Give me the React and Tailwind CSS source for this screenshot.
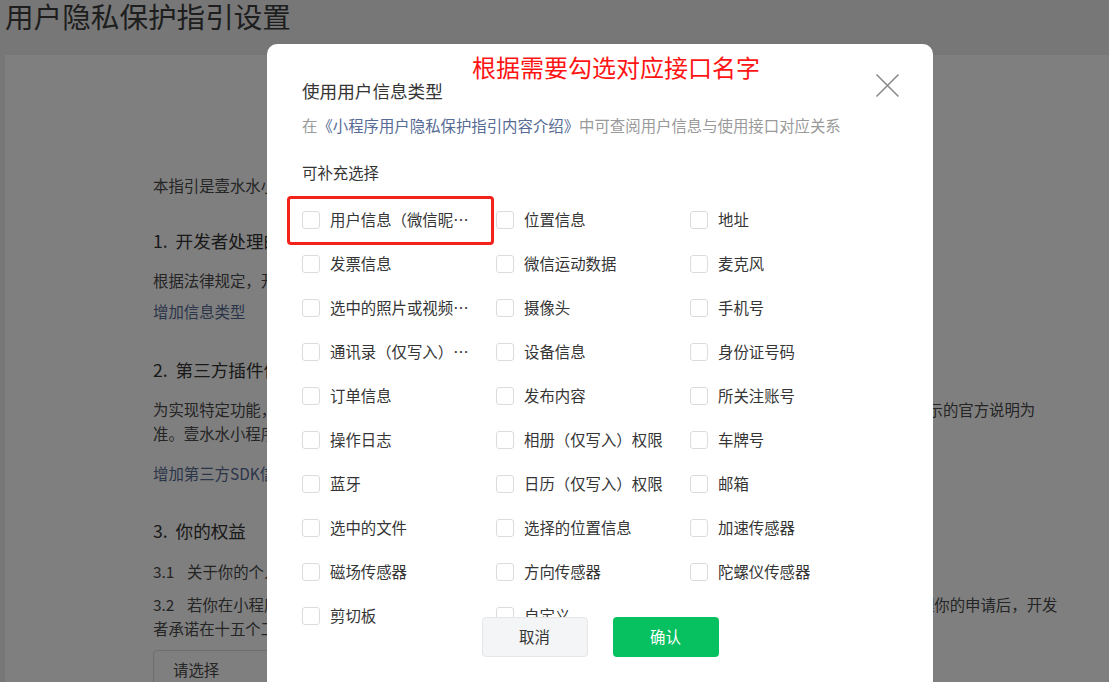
import React from 'react';

const items = [
  '用户信息（微信昵称、头像）', '位置信息', '地址',
  '发票信息', '微信运动数据', '麦克风',
  '选中的照片或视频信息', '摄像头', '手机号',
  '通讯录（仅写入）权限', '设备信息', '身份证号码',
  '订单信息', '发布内容', '所关注账号',
  '操作日志', '相册（仅写入）权限', '车牌号',
  '蓝牙', '日历（仅写入）权限', '邮箱',
  '选中的文件', '选择的位置信息', '加速传感器',
  '磁场传感器', '方向传感器', '陀螺仪传感器',
  '剪切板', '自定义',
];

const Checkbox = () => (
  <span className="w-[18px] h-[18px] shrink-0 rounded-[3px] border border-[#dcdcdc] bg-white" />
);

// page under the mask
const Page = () => (
  <div className="flex flex-col h-full">
    <div className="h-[55px] shrink-0 pl-[5px] text-[28.6px] leading-[32px] text-[#3d3d3d]">
      用户隐私保护指引设置
    </div>
    <div className="flex-1 ml-[5px] bg-white pl-[148px] pt-[118px] text-[15.4px] text-[#4a4a4a]">
      <div className="leading-[24px] whitespace-nowrap">本指引是壹水水小程序开发者为处理你的个人信息而制定。</div>

      <div className="mt-[31px] text-[17.6px] leading-[26px] text-[#333] whitespace-nowrap">1.&nbsp;&nbsp;开发者处理的信息</div>
      <div className="mt-[14px] leading-[24px] whitespace-nowrap">根据法律规定，开发者仅处理实现小程序功能所必要的信息。</div>
      <div className="mt-[7px] leading-[24px] text-[#576b95]">增加信息类型</div>

      <div className="mt-[34px] text-[17.6px] leading-[26px] text-[#333] whitespace-nowrap">2.&nbsp;&nbsp;第三方插件信息</div>
      <div className="mt-[14px] leading-[24px] whitespace-nowrap">为实现特定功能，开发者可能会接入由第三方提供的插件/SDK，第三方插件的个人信息收集处理规则，请以其所公示的官方说明为</div>
      <div className="leading-[24px] whitespace-nowrap">准。壹水水小程序暂未接入第三方插件。</div>
      <div className="mt-[16px] leading-[24px] text-[#576b95]">增加第三方SDK信息</div>

      <div className="mt-[33px] text-[17.6px] leading-[26px] text-[#333] whitespace-nowrap">3.&nbsp;&nbsp;你的权益</div>
      <div className="mt-[15px] leading-[24px] whitespace-nowrap flex">
        <span className="w-[34px]">3.1</span>关于你的个人信息，你可以通过以下方式与开发者联系。
      </div>
      <div className="mt-[9px] leading-[24px] whitespace-nowrap flex">
        <span className="w-[34px]">3.2</span>若你在小程序中注册了账号，你可以通过以下方式与开发者联系，申请注销你在小程序中使用的1账号。在受理你的申请后，开发
      </div>
      <div className="leading-[24px] whitespace-nowrap">者承诺在十五个工作日内完成核查和处理，并按照法律法规要求处理你的相关信息。</div>
      <div className="mt-[10px] w-[300px] h-[40px] rounded-[4px] border border-[#dcdcdc] pl-[19px] flex items-center">请选择</div>
    </div>
  </div>
);

export default function App() {
  return (
    <div
      className="relative w-full h-[682px] overflow-hidden bg-[#eeeeee]"
      style={{ fontFamily: '"Noto Sans CJK SC", "Noto Sans", sans-serif' }}
    >
      <Page />

      {/* mask + dialog */}
      <div className="absolute inset-0 bg-black/50 pl-[267px] pt-[44px]">
        <div className="relative w-[666px] h-[700px] bg-white rounded-[10px] pl-[35px] pt-[34px]">
          {/* red annotation */}
          <div className="absolute left-[205px] top-[6px] text-[24px] leading-[34px] text-[#ff1414] whitespace-nowrap">
            根据需要勾选对应接口名字
          </div>

          <button className="absolute right-[33px] top-[29px] w-[25px] h-[25px] text-[#8a8a8a]" aria-label="close">
            <svg viewBox="0 0 25 25" width="25" height="25" fill="none" stroke="currentColor" strokeWidth="1.6">
              <path d="M1.5 1.5 L23.5 23.5 M23.5 1.5 L1.5 23.5" />
            </svg>
          </button>

          <div className="text-[17.6px] leading-[26px] text-[#353535]">使用用户信息类型</div>
          <div className="mt-[10px] text-[15.4px] leading-[22px] text-[#9a9a9a] whitespace-nowrap">
            在<span className="text-[#576b95]">《小程序用户隐私保护指引内容介绍》</span>中可查阅用户信息与使用接口对应关系
          </div>
          <div className="mt-[25px] text-[15.4px] leading-[22px] text-[#353535]">可补充选择</div>

          <div className="mt-[15px] grid grid-cols-[194px_194px_194px]">
            {items.map((t) => (
              <div key={t} className="h-[44px] flex items-center gap-[10px] text-[15.4px] text-[#353535]">
                <Checkbox />
                <span className="max-w-[141px] truncate">{t}</span>
              </div>
            ))}
          </div>

          {/* highlight box */}
          <div className="absolute left-[20px] top-[152px] w-[207px] h-[49px] rounded-[4px] border-[3px] border-[#f5211b]" />

          <div className="absolute left-0 right-0 top-[573px] flex justify-center gap-[25px] text-[15.4px]">
            <button className="w-[106px] h-[40px] rounded-[4px] border border-[#e6e6e6] bg-[#f4f5f7] text-[#353535]">取消</button>
            <button className="w-[106px] h-[40px] rounded-[4px] bg-[#07c160] text-white">确认</button>
          </div>
        </div>
      </div>
    </div>
  );
}
